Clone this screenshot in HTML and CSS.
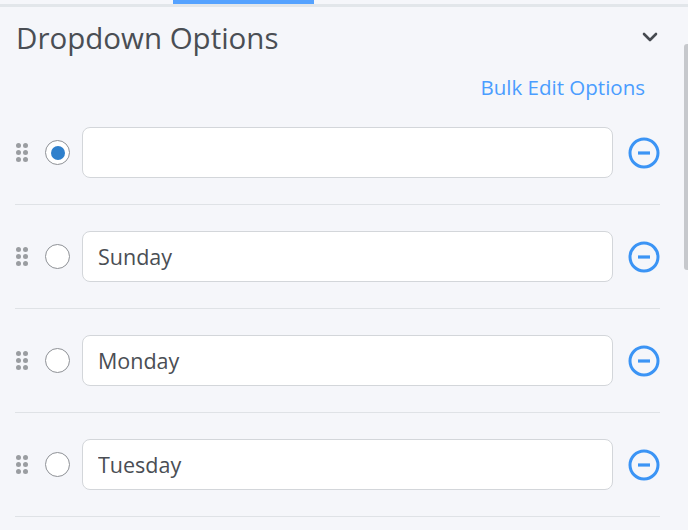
FILE: index.html
```html
<!DOCTYPE html>
<html>
<head>
<title>Dropdown Options</title>
<meta name="viewport" content="width=device-width, initial-scale=1.0">
<link rel="stylesheet" href="styles.css">
</head>
<body>
    <div class="tab-strip">
        <div class="tab-indicator"></div>
    </div>

    <div class="panel">
        <div class="panel-header">
            <h2 class="panel-title">Dropdown Options</h2>
            <svg class="chevron" width="16" height="10" viewBox="0 0 16 10">
                <path d="M2 2 L8 8 L14 2" fill="none" stroke="#464a50" stroke-width="2.6" stroke-linecap="round" stroke-linejoin="round"/>
            </svg>
        </div>

        <div class="bulk-row">
            <a class="bulk-link" href="#">Bulk Edit Options</a>
        </div>

        <div class="option-list">
            <div class="option-row">
                <span class="drag-handle"><i></i><i></i><i></i><i></i><i></i><i></i></span>
                <span class="radio checked"></span>
                <input class="option-input" type="text" value="">
                <svg class="remove-btn" width="32" height="32" viewBox="0 0 32 32">
                    <circle cx="16" cy="16" r="14" fill="none" stroke="#3b94f5" stroke-width="3"/>
                    <line x1="10" y1="16" x2="22" y2="16" stroke="#3b94f5" stroke-width="3.2"/>
                </svg>
            </div>
            <div class="option-row">
                <span class="drag-handle"><i></i><i></i><i></i><i></i><i></i><i></i></span>
                <span class="radio"></span>
                <input class="option-input" type="text" value="Sunday">
                <svg class="remove-btn" width="32" height="32" viewBox="0 0 32 32">
                    <circle cx="16" cy="16" r="14" fill="none" stroke="#3b94f5" stroke-width="3"/>
                    <line x1="10" y1="16" x2="22" y2="16" stroke="#3b94f5" stroke-width="3.2"/>
                </svg>
            </div>
            <div class="option-row">
                <span class="drag-handle"><i></i><i></i><i></i><i></i><i></i><i></i></span>
                <span class="radio"></span>
                <input class="option-input" type="text" value="Monday">
                <svg class="remove-btn" width="32" height="32" viewBox="0 0 32 32">
                    <circle cx="16" cy="16" r="14" fill="none" stroke="#3b94f5" stroke-width="3"/>
                    <line x1="10" y1="16" x2="22" y2="16" stroke="#3b94f5" stroke-width="3.2"/>
                </svg>
            </div>
            <div class="option-row">
                <span class="drag-handle"><i></i><i></i><i></i><i></i><i></i><i></i></span>
                <span class="radio"></span>
                <input class="option-input" type="text" value="Tuesday">
                <svg class="remove-btn" width="32" height="32" viewBox="0 0 32 32">
                    <circle cx="16" cy="16" r="14" fill="none" stroke="#3b94f5" stroke-width="3"/>
                    <line x1="10" y1="16" x2="22" y2="16" stroke="#3b94f5" stroke-width="3.2"/>
                </svg>
            </div>
        </div>
    </div>

    <div class="scroll-thumb"></div>
</body>
</html>
```

FILE: styles.css
```css
/* Sidebar panel with the list of dropdown choices */
body {
    margin: 0;
    background-color: #f5f6fa;
    font-family: "Open Sans", "Noto Sans", sans-serif;
    color: #4a4e54;
    overflow: hidden;
}

.tab-strip {
    height: 4px;
    border-bottom: 3px solid #e2e6ea;
}

.tab-indicator {
    margin-left: 173px;
    width: 141px;
    height: 4px;
    background-color: #55a2ff;
}

.panel {
    padding: 0 28px 0 15px;
}

.panel-header {
    display: flex;
    justify-content: space-between;
    align-items: center;
    height: 60px;
}

.panel-title {
    margin: 0 0 0 1px;
    font-size: 29.5px;
    font-weight: normal;
    color: #4a4e54;
}

.chevron {
    margin-right: 2px;
}

.bulk-row {
    display: flex;
    justify-content: flex-end;
    align-items: flex-end;
    padding-right: 15px;
    height: 34px;
}

.bulk-link {
    font-size: 20.5px;
    color: #4a9dff;
    text-decoration: none;
}

.option-row {
    display: flex;
    align-items: center;
    padding: 26px 0;
    border-bottom: 1px solid #dfe2e6;
}

.drag-handle {
    display: grid;
    grid-template-columns: 5px 5px;
    gap: 2px;
    margin-left: 1px;
    margin-right: 17px;
}

.drag-handle i {
    width: 5px;
    height: 5px;
    border-radius: 50%;
    background-color: #9a9da1;
}

.radio {
    width: 23px;
    height: 23px;
    border: 1px solid #8e9196;
    border-radius: 50%;
    background-color: #fff;
    display: flex;
    justify-content: center;
    align-items: center;
    margin-right: 12px;
}

.radio.checked::after {
    content: "";
    width: 14px;
    height: 14px;
    border-radius: 50%;
    background-color: #2f80cc;
}

.option-input {
    flex: 1;
    height: 51px;
    box-sizing: border-box;
    border: 1px solid #d3d6da;
    border-radius: 8px;
    background-color: #fff;
    padding: 0 15px;
    font-family: inherit;
    font-size: 21.5px;
    color: #4a4e54;
    outline: none;
}

.remove-btn {
    margin-left: 15px;
    flex-shrink: 0;
}

/* overlay scrollbar thumb on the right edge */
.scroll-thumb {
    position: absolute;
    top: 44px;
    right: 0;
    width: 4px;
    height: 226px;
    background-color: #c6c8cc;
    border-radius: 3px 0 0 3px;
}
```
